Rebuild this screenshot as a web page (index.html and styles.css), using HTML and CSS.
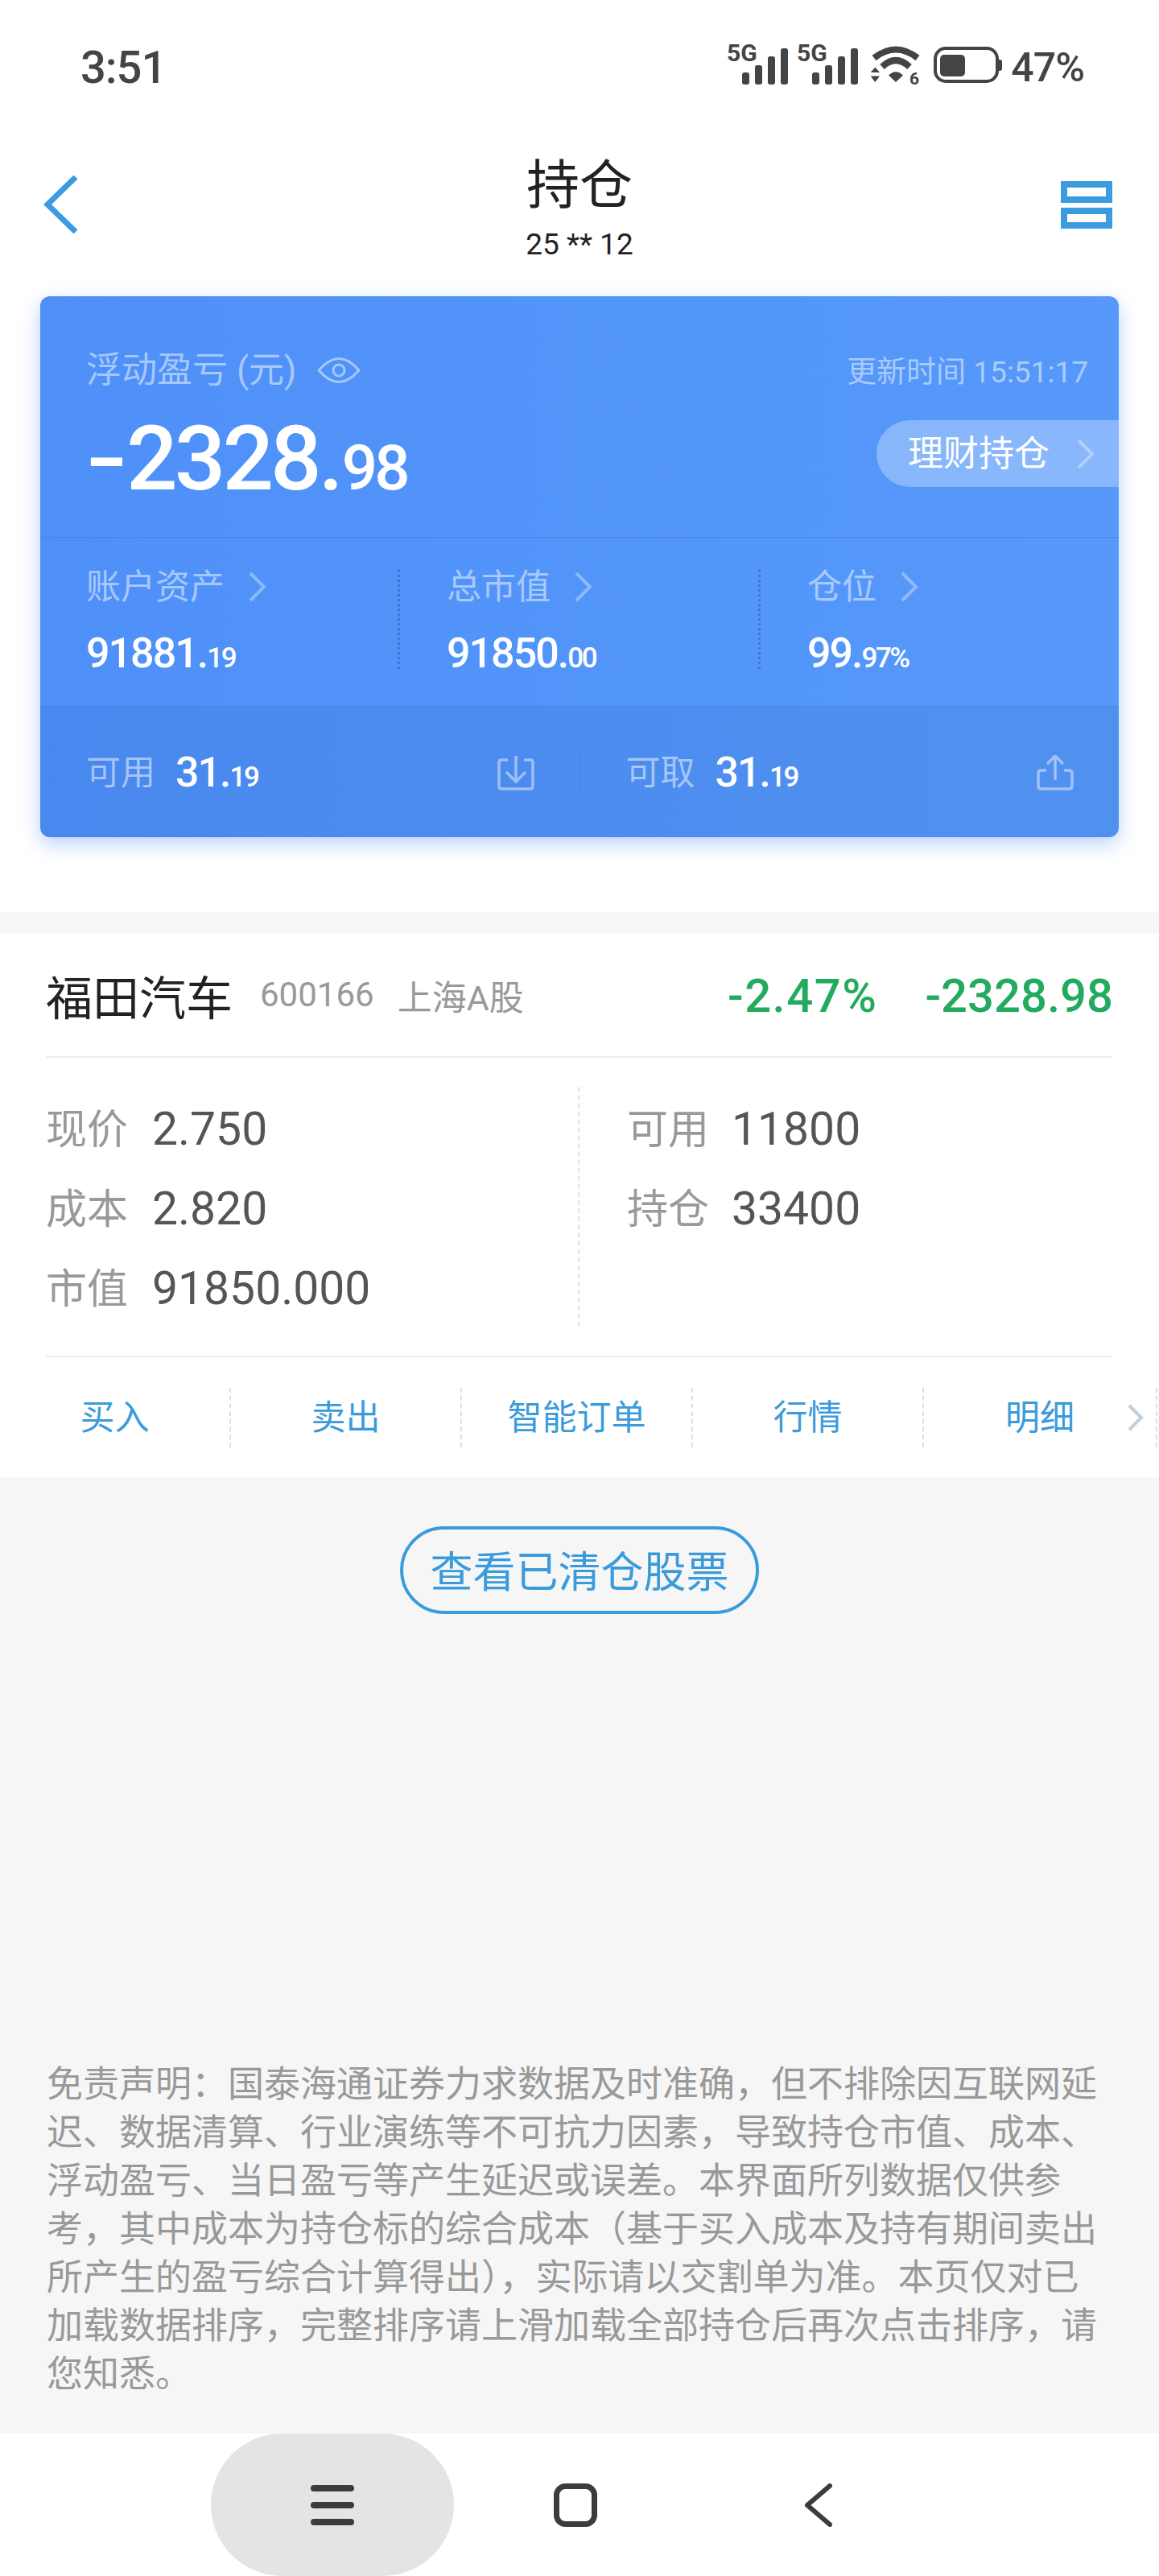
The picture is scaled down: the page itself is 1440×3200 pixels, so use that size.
FILE: index.html
```html
<!DOCTYPE html>
<html lang="zh-CN">
<head>
  <meta charset="UTF-8" />
  <meta name="viewport" content="width=device-width, initial-scale=1.0"/>
  <title>持仓</title>
  <link rel="stylesheet" href="styles.css">
</head>
<body>
  <div class="status-bar">
    <span class="status-time">3:51</span>
    <div class="status-icons">
      <svg class="signal" viewBox="0 -8 76 60">
        <text x="0" y="22" class="signal-label">5G</text>
        <rect x="19" y="36" width="9" height="15" rx="3"/>
        <rect x="35" y="27" width="9" height="24" rx="3"/>
        <rect x="51" y="16" width="9" height="35" rx="3"/>
        <rect x="67" y="6" width="9" height="45" rx="3"/>
      </svg>
      <svg class="signal" viewBox="0 -8 76 60">
        <text x="0" y="22" class="signal-label">5G</text>
        <rect x="19" y="36" width="9" height="15" rx="3"/>
        <rect x="35" y="27" width="9" height="24" rx="3"/>
        <rect x="51" y="16" width="9" height="35" rx="3"/>
        <rect x="67" y="6" width="9" height="45" rx="3"/>
      </svg>
      <svg class="wifi" viewBox="0 0 64 54">
        <path d="M5 16Q32 -5 59 16M15 27Q32 11 49 27" fill="none" stroke="#444" stroke-width="8"/>
        <path d="M23 37.5Q32 29 41 37.5L32 46Z"/>
        <path d="M6.3 27.5L12 34H.7ZM.7 38.5H12L6.3 46Z"/>
        <text x="49" y="49" class="wifi-label">6</text>
      </svg>
      <svg class="battery" viewBox="0 0 85 46">
        <rect x="2" y="2" width="77" height="41" rx="13" fill="none" stroke="#444" stroke-width="4"/>
        <rect x="8" y="10" width="31" height="27" rx="5"/>
        <path d="M80 16H82Q85 16 85 19V27Q85 30 82 30H80Z"/>
      </svg>
      <span class="status-battery">47%</span>
    </div>
  </div>

  <header class="top-nav">
    <svg class="nav-back" viewBox="0 0 44 72">
      <polyline points="40,2 5,36 40,70" fill="none" stroke="#3a9be0" stroke-width="7"/>
    </svg>
    <div class="nav-title">
      <h1>持仓</h1>
      <p>25 ** 12</p>
    </div>
    <svg class="nav-list" viewBox="0 0 64 59">
      <rect x="4" y="4" width="56" height="19" fill="none" stroke="#3a9be0" stroke-width="8"/>
      <rect x="4" y="37" width="56" height="18" fill="none" stroke="#3a9be0" stroke-width="8"/>
    </svg>
  </header>

  <section class="card">
    <div class="card-top">
      <div>
        <div class="pnl-label">
          浮动盈亏 (元)
          <svg class="eye" viewBox="0 0 54 40">
            <path d="M2 20Q27 -9 52 20Q27 49 2 20Z" fill="none" stroke="#a6c8fb" stroke-width="3"/>
            <circle cx="27" cy="20" r="7" fill="none" stroke="#a6c8fb" stroke-width="3"/>
          </svg>
        </div>
        <div class="pnl-value"><span class="pnl-minus">-</span>2328<span class="pnl-dot">.</span><span class="pnl-dec">98</span></div>
      </div>
      <div class="card-top-right">
        <div class="update-time">更新时间 15:51:17</div>
        <div class="finance-pill">
          理财持仓
          <svg class="chev" viewBox="0 0 22 38"><polyline points="2,2 19,19 2,36"/></svg>
        </div>
      </div>
    </div>

    <div class="card-stats">
      <div class="stat">
        <div class="stat-label">账户资产 <svg class="chev" viewBox="0 0 22 38"><polyline points="2,2 19,19 2,36"/></svg></div>
        <div class="stat-value">91881.<span class="stat-dec">19</span></div>
      </div>
      <div class="stat">
        <div class="stat-label">总市值 <svg class="chev" viewBox="0 0 22 38"><polyline points="2,2 19,19 2,36"/></svg></div>
        <div class="stat-value">91850.<span class="stat-dec">00</span></div>
      </div>
      <div class="stat">
        <div class="stat-label">仓位 <svg class="chev" viewBox="0 0 22 38"><polyline points="2,2 19,19 2,36"/></svg></div>
        <div class="stat-value">99.<span class="stat-dec">97%</span></div>
      </div>
    </div>

    <div class="card-foot">
      <div class="foot-half">
        <span class="foot-label">可用</span>
        <span class="stat-value">31.<span class="stat-dec">19</span></span>
        <svg class="foot-icon" viewBox="0 0 46 44">
          <path d="M13 6H5Q2 6 2 9V39Q2 42 5 42H41Q44 42 44 39V9Q44 6 41 6H33M23 1V32M11 21L23 33L35 21"/>
        </svg>
      </div>
      <div class="foot-sep"></div>
      <div class="foot-half">
        <span class="foot-label">可取</span>
        <span class="stat-value">31.<span class="stat-dec">19</span></span>
        <svg class="foot-icon" viewBox="0 0 46 44">
          <path d="M12 19H6Q2 19 2 23V38Q2 42 6 42H40Q44 42 44 38V23Q44 19 40 19H34M23 31V2M13 11L23 1L33 11"/>
        </svg>
      </div>
    </div>
  </section>

  <main class="content">
    <section class="holding">
      <div class="holding-head">
        <span class="stock-name">福田汽车</span>
        <span class="stock-code">600166</span>
        <span class="stock-market">上海A股</span>
        <span class="stock-pct">-2.47%</span>
        <span class="stock-pnl">-2328.98</span>
      </div>

      <div class="holding-detail">
        <div class="detail-col detail-left">
          <div class="detail-row"><span class="detail-label">现价</span><span class="detail-value">2.750</span></div>
          <div class="detail-row"><span class="detail-label">成本</span><span class="detail-value">2.820</span></div>
          <div class="detail-row"><span class="detail-label">市值</span><span class="detail-value">91850.000</span></div>
        </div>
        <div class="detail-col detail-right">
          <div class="detail-row"><span class="detail-label">可用</span><span class="detail-value">11800</span></div>
          <div class="detail-row"><span class="detail-label">持仓</span><span class="detail-value">33400</span></div>
        </div>
      </div>

      <div class="actions">
        <div class="action">买入</div>
        <div class="action">卖出</div>
        <div class="action">智能订单</div>
        <div class="action">行情</div>
        <div class="action action-last">
          明细
          <svg class="action-more" viewBox="0 0 20 34"><polyline points="2,2 17,17 2,32"/></svg>
        </div>
      </div>
    </section>

    <button class="cleared-btn">查看已清仓股票</button>

    <p class="disclaimer">免责声明&#xFF1A;国泰海通证券力求数据及时准确&#xFF0C;但不排除因互联网延迟、数据清算、行业演练等不可抗力因素&#xFF0C;导致持仓市值、成本、浮动盈亏、当日盈亏等产生延迟或误差。本界面所列数据仅供参考&#xFF0C;其中成本为持仓标的综合成本&#xFF08;基于买入成本及持有期间卖出所产生的盈亏综合计算得出&#xFF09;&#xFF0C;实际请以交割单为准。本页仅对已加载数据排序&#xFF0C;完整排序请上滑加载全部持仓后再次点击排序&#xFF0C;请您知悉。</p>
  </main>

  <nav class="sys-nav">
    <div class="sys-item sys-active">
      <svg class="sys-icon" viewBox="0 0 54 54">
        <path d="M4 6H50M4 27H50M4 48H50" fill="none" stroke="#3c3c3c" stroke-width="8" stroke-linecap="round"/>
      </svg>
    </div>
    <div class="sys-item">
      <svg class="sys-icon" viewBox="0 0 54 54">
        <rect x="3.5" y="3.5" width="47" height="47" rx="11" fill="none" stroke="#3c3c3c" stroke-width="7"/>
      </svg>
    </div>
    <div class="sys-item">
      <svg class="sys-icon" viewBox="0 0 54 54">
        <path d="M41 3L13 27L41 51" fill="none" stroke="#3c3c3c" stroke-width="6" stroke-linecap="round" stroke-linejoin="round"/>
      </svg>
    </div>
  </nav>
</body>
</html>
```

FILE: styles.css
```css
* {
  box-sizing: border-box;
}

body {
  margin: 0;
  width: 1440px;
  height: 3200px;
  display: flex;
  flex-direction: column;
  overflow: hidden;
  background-color: #fff;
  font-family: Roboto, "Noto Sans CJK SC", sans-serif;
  color: #222;
}

/* status bar */
.status-bar {
  height: 168px;
  padding: 0 93px 0 100px;
  display: flex;
  align-items: center;
  justify-content: space-between;
  color: #444;
}

.status-time {
  font-size: 56px;
  font-weight: 500;
  letter-spacing: -1px;
}

.status-icons {
  display: flex;
  align-items: center;
  fill: #444;
}

.signal {
  width: 76px;
  height: 60px;
  margin-right: 11px;
  margin-top: -16px;
}

.signal-label {
  font-size: 30px;
  font-weight: 700;
}

.wifi {
  width: 64px;
  height: 54px;
  margin: -2px 15px 0 4px;
}

.wifi-label {
  font-size: 21px;
  font-weight: 700;
}

.battery {
  width: 85px;
  height: 46px;
  margin: -6px 11px 0 0;
}

.status-battery {
  font-size: 50px;
  font-weight: 500;
  line-height: 60px;
  letter-spacing: -1px;
}

/* page title */
.top-nav {
  height: 200px;
  padding: 0 58px 24px 54px;
  display: flex;
  align-items: center;
  justify-content: space-between;
}

.nav-back {
  width: 44px;
  height: 72px;
  margin: -4px 24px 0 0;
}

.nav-list {
  width: 64px;
  height: 59px;
  margin-top: -4px;
}

.nav-title {
  text-align: center;
}

.nav-title h1 {
  margin: 0;
  font-size: 66px;
  font-weight: 400;
  line-height: 90px;
}

.nav-title p {
  margin: 5px 0 0;
  font-size: 37px;
  line-height: 46px;
}

/* blue card */
.card {
  height: 672px;
  margin: 0 50px;
  border-radius: 12px;
  overflow: hidden;
  background: linear-gradient(90deg, #4e90f8, #5699fa);
  box-shadow: 0 8px 24px rgba(80, 140, 250, 0.4);
  color: #fff;
}

.card-top {
  height: 300px;
  padding: 70px 0 0 57px;
  display: flex;
  justify-content: space-between;
  border-bottom: 1px solid rgba(40, 90, 190, 0.25);
}

.pnl-label {
  display: flex;
  align-items: center;
  gap: 26px;
  height: 44px;
  font-size: 44px;
  line-height: 44px;
  color: rgba(255, 255, 255, 0.5);
}

.eye {
  width: 54px;
  height: 40px;
}

.pnl-value {
  margin-top: 32px;
  font-size: 112px;
  font-weight: 500;
  line-height: 112px;
  letter-spacing: -4px;
}

.pnl-minus {
  display: inline-block;
  margin-right: 12px;
  transform: scaleX(1.35);
  transform-origin: left;
  letter-spacing: 0;
}

.pnl-dot {
  letter-spacing: -2px;
}

.pnl-dec {
  font-size: 78px;
  letter-spacing: -4px;
}

.card-top-right {
  display: flex;
  flex-direction: column;
  align-items: flex-end;
  padding-top: 3px;
}

.update-time {
  margin-right: 38px;
  font-size: 37px;
  line-height: 44px;
  color: rgba(255, 255, 255, 0.5);
}

.finance-pill {
  width: 301px;
  height: 83px;
  margin-top: 37px;
  padding: 0 0 8px 39px;
  display: flex;
  align-items: center;
  gap: 34px;
  border-radius: 42px 0 0 42px;
  background-color: rgba(255, 255, 255, 0.3);
  font-size: 44px;
}

.finance-pill .chev {
  margin-top: 8px;
}

.chev {
  width: 22px;
  height: 38px;
  fill: none;
  stroke: rgba(255, 255, 255, 0.35);
  stroke-width: 4;
}

.card-stats {
  height: 208px;
  padding: 39px 0 0 57px;
  display: grid;
  grid-template-columns: repeat(3, 448px);
}

.stat {
  width: 390px;
  height: 124px;
  border-right: 3px dotted rgba(40, 80, 170, 0.45);
}

.stat:last-child {
  border-right: none;
}

.stat-label {
  display: flex;
  align-items: center;
  gap: 30px;
  height: 44px;
  font-size: 43px;
  line-height: 44px;
  color: rgba(255, 255, 255, 0.5);
}

.stat-value {
  margin-top: 31px;
  font-size: 52px;
  font-weight: 500;
  line-height: 60px;
  letter-spacing: -2px;
}

.stat-dec {
  font-size: 35px;
  letter-spacing: -2.5px;
}

.card-foot {
  height: 164px;
  display: flex;
  align-items: center;
  background-color: rgba(0, 20, 80, 0.06);
}

.foot-half {
  flex: 1;
  display: flex;
  align-items: center;
  gap: 25px;
  padding: 4px 56px 0 57px;
}

.foot-half .stat-value {
  margin-top: 5px;
}

.foot-label {
  font-size: 43px;
  line-height: 44px;
  color: rgba(255, 255, 255, 0.5);
}

.foot-icon {
  width: 46px;
  height: 44px;
  margin-left: auto;
  fill: none;
  stroke: rgba(255, 255, 255, 0.45);
  stroke-width: 3.5;
}

.foot-sep {
  width: 1px;
  height: 52px;
  background-color: rgba(40, 80, 170, 0.2);
}

/* holdings */
.content {
  flex: 1;
  margin-top: 93px;
  display: flex;
  flex-direction: column;
  background-color: #f6f6f6;
  padding-top: 26px;
}

.holding {
  background-color: #fff;
}

.holding-head {
  height: 155px;
  margin: 0 58px 0 57px;
  display: flex;
  align-items: center;
  border-bottom: 2px solid #eee;
}

.stock-name {
  font-size: 58px;
}

.stock-code {
  margin-left: 34px;
  font-size: 42px;
  color: #999;
}

.stock-market {
  margin-left: 29px;
  font-size: 43px;
  color: #999;
}

.stock-pct,
.stock-pnl {
  font-size: 58px;
  font-weight: 500;
  line-height: 70px;
  margin-top: 2px;
  color: #22ab5e;
}

.stock-pct {
  margin-left: auto;
  letter-spacing: 1.5px;
}

.stock-pnl {
  margin: 2px -1px 0 59px;
}

.holding-detail {
  height: 372px;
  margin: 0 58px 0 57px;
  padding: 36px 0;
  display: flex;
  border-bottom: 2px solid #eee;
}

.detail-left {
  width: 663px;
  border-right: 2px dashed #e2e2e2;
}

.detail-right {
  padding-left: 59px;
}

.detail-row {
  height: 99px;
  display: flex;
  align-items: center;
}

.detail-label {
  width: 132px;
  margin-top: -2px;
  font-size: 51px;
  color: #999;
}

.detail-right .detail-label {
  width: 130px;
}

.detail-value {
  margin-top: 6px;
  font-size: 57px;
  color: #555;
}

.actions {
  height: 149px;
  display: flex;
  align-items: center;
}

.action {
  position: relative;
  width: 287px;
  height: 74px;
  padding-bottom: 8px;
  display: flex;
  align-items: center;
  justify-content: center;
  border-right: 2px dashed #ddd;
  font-size: 43px;
  color: #3a9bdc;
}

.action-last {
  width: 290px;
}

.action-more {
  position: absolute;
  right: 15px;
  top: 20px;
  width: 20px;
  height: 34px;
  fill: none;
  stroke: #c0cfdc;
  stroke-width: 4;
}

.cleared-btn {
  width: 446px;
  height: 109px;
  margin: 61px auto 0;
  padding: 0 0 4px;
  border: 4px solid #3a9bdc;
  border-radius: 55px;
  background: transparent;
  font-family: inherit;
  font-size: 53px;
  color: #3a9bdc;
}

.disclaimer {
  margin: auto 0 0;
  padding: 0 58px 43px;
  font-size: 45px;
  line-height: 60px;
  color: #999;
}

/* android nav */
.sys-nav {
  height: 177px;
  padding-left: 262px;
  display: flex;
}

.sys-item {
  width: 302px;
  display: flex;
  align-items: center;
  justify-content: center;
}

.sys-active {
  border-radius: 89px;
  background-color: #e4e4e4;
}

.sys-icon {
  width: 54px;
  height: 54px;
}
```
